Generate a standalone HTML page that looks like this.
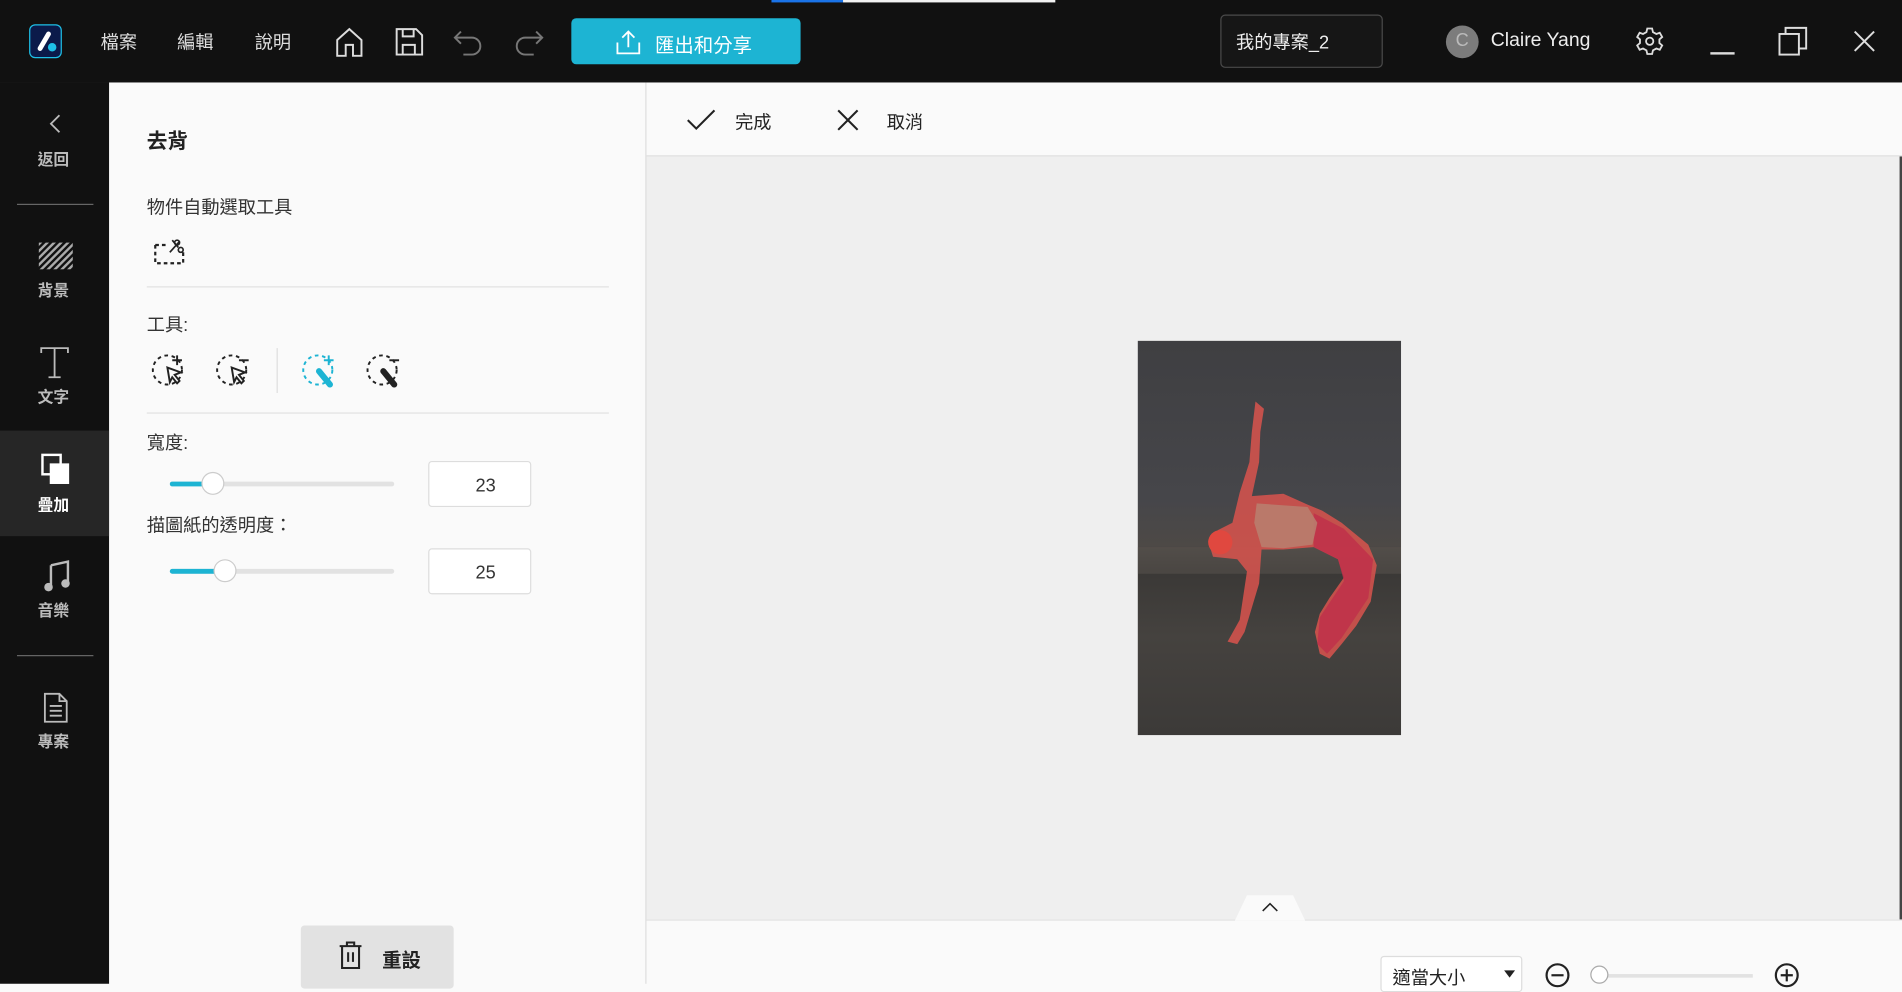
<!DOCTYPE html>
<html><head><meta charset="utf-8"><style>
html,body{margin:0;padding:0;width:1902px;height:984px;overflow:hidden;background:#fafafa}
#s{position:absolute;left:0;top:0;width:1568px;height:811px;transform:scale(1.21301);transform-origin:0 0;font-family:"Liberation Sans","Noto Sans CJK TC",sans-serif;}
.a{position:absolute}
.t{position:absolute;white-space:nowrap}
svg{position:absolute;overflow:visible}
</style></head><body><div id="s">
<div class="a" style="left:0;top:0;width:1568px;height:68px;background:#111"></div>
<div class="a" style="left:636px;top:0;width:59px;height:2px;background:#1a73e8"></div>
<div class="a" style="left:695px;top:0;width:175px;height:2px;background:#f2f2f2"></div>
<div class="a" style="left:24px;top:20px;width:27px;height:28px;border-radius:5px;background:#0b1a4a;border:1px solid #1ec0e8;box-sizing:border-box"></div>
<svg style="left:24px;top:20px" width="28" height="28"><path d="M9 20 L16 8" stroke="#fff" stroke-width="4" stroke-linecap="round"/><circle cx="19" cy="19" r="3.5" fill="#1ec0e8"/></svg>
<div class="t" style="left:83px;top:24px;font-size:15px;color:#ddd">檔案</div>
<div class="t" style="left:146px;top:24px;font-size:15px;color:#ddd">編輯</div>
<div class="t" style="left:210px;top:24px;font-size:15px;color:#ddd">說明</div>
<svg style="left:276px;top:22px" width="24" height="26" fill="none" stroke="#ddd" stroke-width="1.6"><path d="M2 11 L12 2 L22 11 V24 H15 V15 H9 V24 H2 Z"/></svg>
<svg style="left:325px;top:22px" width="24" height="25" fill="none" stroke="#ddd" stroke-width="1.6"><path d="M2 2 H18 L23 7 V23 H2 Z M7 2 V8 H16 V2 M7 23 V15 H17 V23"/></svg>
<svg style="left:374px;top:24px" width="26" height="22" fill="none" stroke="#777" stroke-width="1.6"><path d="M6 2 L1 7 L6 12 M1 7 H15 A7 7 0 0 1 15 21 H8"/></svg>
<svg style="left:422px;top:24px" width="26" height="22" fill="none" stroke="#777" stroke-width="1.6"><path d="M20 2 L25 7 L20 12 M25 7 H11 A7 7 0 0 0 11 21 H18"/></svg>
<div class="a" style="left:471px;top:15px;width:189px;height:38px;border-radius:4px;background:#1db4d3"></div>
<svg style="left:507px;top:24px" width="22" height="22" fill="none" stroke="#fff" stroke-width="1.5"><path d="M11 15 V2 M6 7 L11 2 L16 7 M2 11 V20 H20 V11"/></svg>
<div class="t" style="left:540px;top:24px;font-size:16px;color:#fff">匯出和分享</div>
<div class="a" style="left:1006px;top:12px;width:134px;height:44px;border:1px solid #4a4a4a;border-radius:4px;box-sizing:border-box;background:#161616"></div>
<div class="t" style="left:1019px;top:24px;font-size:15px;color:#eee">我的專案_2</div>
<div class="a" style="left:1192px;top:21px;width:27px;height:27px;border-radius:50%;background:#7c7c7c"></div>
<div class="t" style="left:1200px;top:25px;font-size:15px;color:#bbb">C</div>
<div class="t" style="left:1229px;top:25px;font-size:16px;color:#eee">Claire Yang</div>
<svg style="left:1348px;top:22px" width="24" height="24" fill="none" stroke="#ddd" stroke-width="1.5"><circle cx="12" cy="12" r="3"/><path d="M10 1.5 H14 L14.7 4.5 L17.5 6 L20.3 5 L22.3 8.5 L20 10.5 V13.5 L22.3 15.5 L20.3 19 L17.5 18 L14.7 19.5 L14 22.5 H10 L9.3 19.5 L6.5 18 L3.7 19 L1.7 15.5 L4 13.5 V10.5 L1.7 8.5 L3.7 5 L6.5 6 L9.3 4.5 Z"/></svg>
<div class="a" style="left:1410px;top:43px;width:20px;height:2px;background:#ddd"></div>
<svg style="left:1466px;top:22px" width="24" height="24" fill="none" stroke="#ddd" stroke-width="1.6"><rect x="1" y="6" width="16" height="17"/><path d="M6 6 V1 H23 V18 H17"/></svg>
<svg style="left:1528px;top:25px" width="18" height="18" stroke="#ddd" stroke-width="1.6"><path d="M1 1 L17 17 M17 1 L1 17"/></svg>
<div class="a" style="left:0;top:68px;width:90px;height:743px;background:#111"></div>
<svg style="left:40px;top:94px" width="10" height="16" fill="none" stroke="#bbb" stroke-width="1.5"><path d="M9 1 L2 8 L9 15"/></svg>
<div class="t" style="left:31px;top:121px;font-size:13px;color:#bbb;font-weight:bold">返回</div>
<div class="a" style="left:14px;top:168px;width:63px;height:1px;background:#666"></div>
<svg style="left:32px;top:200px" width="28" height="22"><defs><pattern id="h" width="4" height="4" patternUnits="userSpaceOnUse" patternTransform="rotate(45)"><rect width="2" height="4" fill="#aaa"/></pattern></defs><rect width="28" height="22" fill="url(#h)"/></svg>
<div class="t" style="left:31px;top:229px;font-size:13px;color:#bbb;font-weight:bold">背景</div>
<svg style="left:33px;top:286px" width="24" height="26" fill="none" stroke="#bbb" stroke-width="1.5"><path d="M1 5 V1 H23 V5 M12 1 V25 M7 25 H17"/></svg>
<div class="t" style="left:31px;top:317px;font-size:13px;color:#bbb;font-weight:bold">文字</div>
<div class="a" style="left:0;top:355px;width:90px;height:87px;background:#262626"></div>
<svg style="left:34px;top:374px" width="24" height="26"><rect x="1" y="1" width="15" height="16" fill="none" stroke="#fff" stroke-width="2"/><rect x="7" y="8" width="16" height="17" fill="#fff"/></svg>
<div class="t" style="left:31px;top:406px;font-size:13px;color:#fff;font-weight:bold">疊加</div>
<svg style="left:36px;top:462px" width="22" height="26" fill="#bbb"><path d="M6 4 L20 1 V18" stroke="#bbb" stroke-width="2" fill="none"/><path d="M6 4 V22" stroke="#bbb" stroke-width="2"/><circle cx="4" cy="22" r="3.5"/><circle cx="18" cy="19" r="3.5"/></svg>
<div class="t" style="left:31px;top:493px;font-size:13px;color:#bbb;font-weight:bold">音樂</div>
<div class="a" style="left:14px;top:540px;width:63px;height:1px;background:#666"></div>
<svg style="left:36px;top:571px" width="20" height="25" fill="none" stroke="#bbb" stroke-width="1.5"><path d="M1 1 H13 L19 7 V24 H1 Z M13 1 V7 H19 M5 11 H15 M5 15 H15 M5 19 H15"/></svg>
<div class="t" style="left:31px;top:601px;font-size:13px;color:#bbb;font-weight:bold">專案</div>
<div class="a" style="left:90px;top:68px;width:442px;height:743px;background:#fafafa;border-right:1px solid #ddd"></div>
<div class="t" style="left:121px;top:102px;font-size:17px;font-weight:bold;color:#222">去背</div>
<div class="t" style="left:121px;top:160px;font-size:15px;color:#333">物件自動選取工具</div>
<svg style="left:127px;top:196px" width="26" height="22" fill="none" stroke="#222" stroke-width="1.8" stroke-dasharray="3 2.5"><path d="M1 6 V21 H24 V12 M1 6 H10"/><circle cx="19" cy="4" r="2" stroke-dasharray="none" stroke-width="1.4"/><circle cx="22" cy="10" r="2" stroke-dasharray="none" stroke-width="1.4"/><path d="M13 12 L21 3 M15 2 L20 8" stroke-dasharray="none" stroke-width="1.4"/></svg>
<div class="a" style="left:121px;top:236px;width:381px;height:1px;background:#e2e2e2"></div>
<div class="t" style="left:121px;top:257px;font-size:15px;color:#333">工具:</div>
<svg style="left:124px;top:290px" width="32" height="32" fill="none" stroke="#222" stroke-width="1.6"><circle cx="14" cy="15" r="12" stroke-dasharray="3 3"/><path d="M22 3 V11 M18 7 H26"/><path d="M14 13 L25 17 L20 19 L24 24 L22 26 L18 21 L16 25 Z" fill="#fafafa"/></svg>
<svg style="left:177px;top:290px" width="32" height="32" fill="none" stroke="#222" stroke-width="1.6"><circle cx="14" cy="15" r="12" stroke-dasharray="3 3"/><path d="M20 7 H28"/><path d="M14 13 L25 17 L20 19 L24 24 L22 26 L18 21 L16 25 Z" fill="#fafafa"/></svg>
<div class="a" style="left:228px;top:287px;width:1px;height:37px;background:#ddd"></div>
<svg style="left:248px;top:290px" width="32" height="32" fill="none" stroke="#1db4d3" stroke-width="1.6"><circle cx="14" cy="15" r="12" stroke-dasharray="3 3"/><path d="M23 3 V11 M19 7 H27"/><path d="M15 16 L24 27" stroke-width="5" stroke-linecap="round"/></svg>
<svg style="left:301px;top:290px" width="32" height="32" fill="none" stroke="#222" stroke-width="1.6"><circle cx="14" cy="15" r="12" stroke-dasharray="3 3"/><path d="M20 7 H28"/><path d="M15 16 L24 27" stroke-width="5" stroke-linecap="round"/></svg>
<div class="a" style="left:121px;top:340px;width:381px;height:1px;background:#e2e2e2"></div>
<div class="t" style="left:121px;top:354px;font-size:15px;color:#333">寬度:</div>
<div class="a" style="left:140px;top:397px;width:185px;height:4px;background:#e2e2e2;border-radius:2px"></div>
<div class="a" style="left:140px;top:397px;width:36px;height:4px;background:#1db4d3;border-radius:2px"></div>
<div class="a" style="left:166px;top:389px;width:19px;height:19px;border-radius:50%;background:#fff;border:1px solid #ccc;box-sizing:border-box"></div>
<div class="a" style="left:353px;top:380px;width:85px;height:38px;border:1px solid #ddd;border-radius:3px;background:#fff;box-sizing:border-box"></div>
<div class="t" style="left:392px;top:392px;font-size:15px;color:#333">23</div>
<div class="t" style="left:121px;top:422px;font-size:15px;color:#333">描圖紙的透明度：</div>
<div class="a" style="left:140px;top:469px;width:185px;height:4px;background:#e2e2e2;border-radius:2px"></div>
<div class="a" style="left:140px;top:469px;width:46px;height:4px;background:#1db4d3;border-radius:2px"></div>
<div class="a" style="left:176px;top:461px;width:19px;height:19px;border-radius:50%;background:#fff;border:1px solid #ccc;box-sizing:border-box"></div>
<div class="a" style="left:353px;top:452px;width:85px;height:38px;border:1px solid #ddd;border-radius:3px;background:#fff;box-sizing:border-box"></div>
<div class="t" style="left:392px;top:464px;font-size:15px;color:#333">25</div>
<div class="a" style="left:248px;top:763px;width:126px;height:52px;border-radius:3px;background:#e2e2e2"></div>
<svg style="left:279px;top:776px" width="20" height="23" fill="none" stroke="#222" stroke-width="1.7"><path d="M1 4 H19 M7 4 V1 H13 V4 M3 4 V22 H17 V4 M8 9 V17 M12 9 V17"/></svg>
<div class="t" style="left:315px;top:778px;font-size:16px;font-weight:bold;color:#222">重設</div>
<div class="a" style="left:533px;top:68px;width:1035px;height:61px;background:#fafafa;border-bottom:1px solid #e0e0e0;box-sizing:border-box"></div>
<svg style="left:566px;top:90px" width="24" height="18" fill="none" stroke="#222" stroke-width="1.7"><path d="M1 9 L8 16 L23 1"/></svg>
<div class="t" style="left:606px;top:90px;font-size:15px;color:#222">完成</div>
<svg style="left:690px;top:90px" width="18" height="18" stroke="#222" stroke-width="1.7"><path d="M1 1 L17 17 M17 1 L1 17"/></svg>
<div class="t" style="left:731px;top:90px;font-size:15px;color:#222">取消</div>
<div class="a" style="left:533px;top:129px;width:1035px;height:629px;background:#efefef"></div>
<div class="a" style="left:1566px;top:129px;width:2px;height:629px;background:#444"></div>
<div class="a" style="left:938px;top:281px;width:217px;height:325px;background:linear-gradient(#3f3f42 0%,#46464a 40%,#4d4946 52%,#3a3836 58%,#45423f 75%,#3c3a38 100%);overflow:hidden">
<svg style="left:0;top:0" width="217" height="325">
<rect x="0" y="170" width="217" height="22" fill="#57524d" opacity=".6"/>
<path d="M97 50 L104 56 L101 75 L100 100 L94 128 L120 126 L140 135 L152 140 L168 150 L190 168 L197 185 L192 215 L180 235 L168 250 L158 262 L150 258 L146 240 L150 225 L158 212 L170 195 L165 180 L145 170 L120 172 L102 172 L100 200 L88 240 L82 250 L74 248 L84 230 L90 190 L82 180 L62 178 L58 165 L66 156 L78 150 L84 125 L92 100 L94 75 Z" fill="#d9544d" opacity=".85"/>
<path d="M145 142 L170 155 L194 180 L190 212 L168 245 L156 258 L148 250 L150 228 L170 198 L165 180 L145 170 Z" fill="#c0304a" opacity=".85"/>
<path d="M98 134 L140 137 L148 150 L144 168 L120 171 L102 170 L96 150 Z" fill="#b88070" opacity=".85"/>
<circle cx="68" cy="166" r="10" fill="#e0483f"/>
</svg></div>
<div class="a" style="left:533px;top:758px;width:1035px;height:53px;background:#fafafa;border-top:1px solid #e2e2e2;box-sizing:border-box"></div>
<svg style="left:1018px;top:738px" width="58" height="21"><path d="M10 0 H48 L58 21 H0 Z" fill="#fafafa"/><path d="M23 13 L29 7 L35 13" fill="none" stroke="#222" stroke-width="1.3"/></svg>
<div class="a" style="left:1138px;top:788px;width:117px;height:30px;border:1px solid #ddd;border-radius:3px;background:#fff;box-sizing:border-box"></div>
<div class="t" style="left:1148px;top:795px;font-size:15px;color:#222">適當大小</div>
<svg style="left:1240px;top:800px" width="9" height="6"><path d="M0 0 H9 L4.5 6 Z" fill="#222"/></svg>
<svg style="left:1273px;top:793px" width="22" height="22" fill="none" stroke="#222" stroke-width="1.8"><circle cx="11" cy="11" r="9"/><path d="M6 11 H16"/></svg>
<div class="a" style="left:1315px;top:803px;width:130px;height:3px;background:#e2e2e2"></div>
<div class="a" style="left:1311px;top:796px;width:15px;height:15px;border-radius:50%;background:#fff;border:1px solid #aaa;box-sizing:border-box"></div>
<svg style="left:1462px;top:793px" width="22" height="22" fill="none" stroke="#222" stroke-width="1.8"><circle cx="11" cy="11" r="9"/><path d="M6 11 H16 M11 6 V16"/></svg>
</div></body></html>
